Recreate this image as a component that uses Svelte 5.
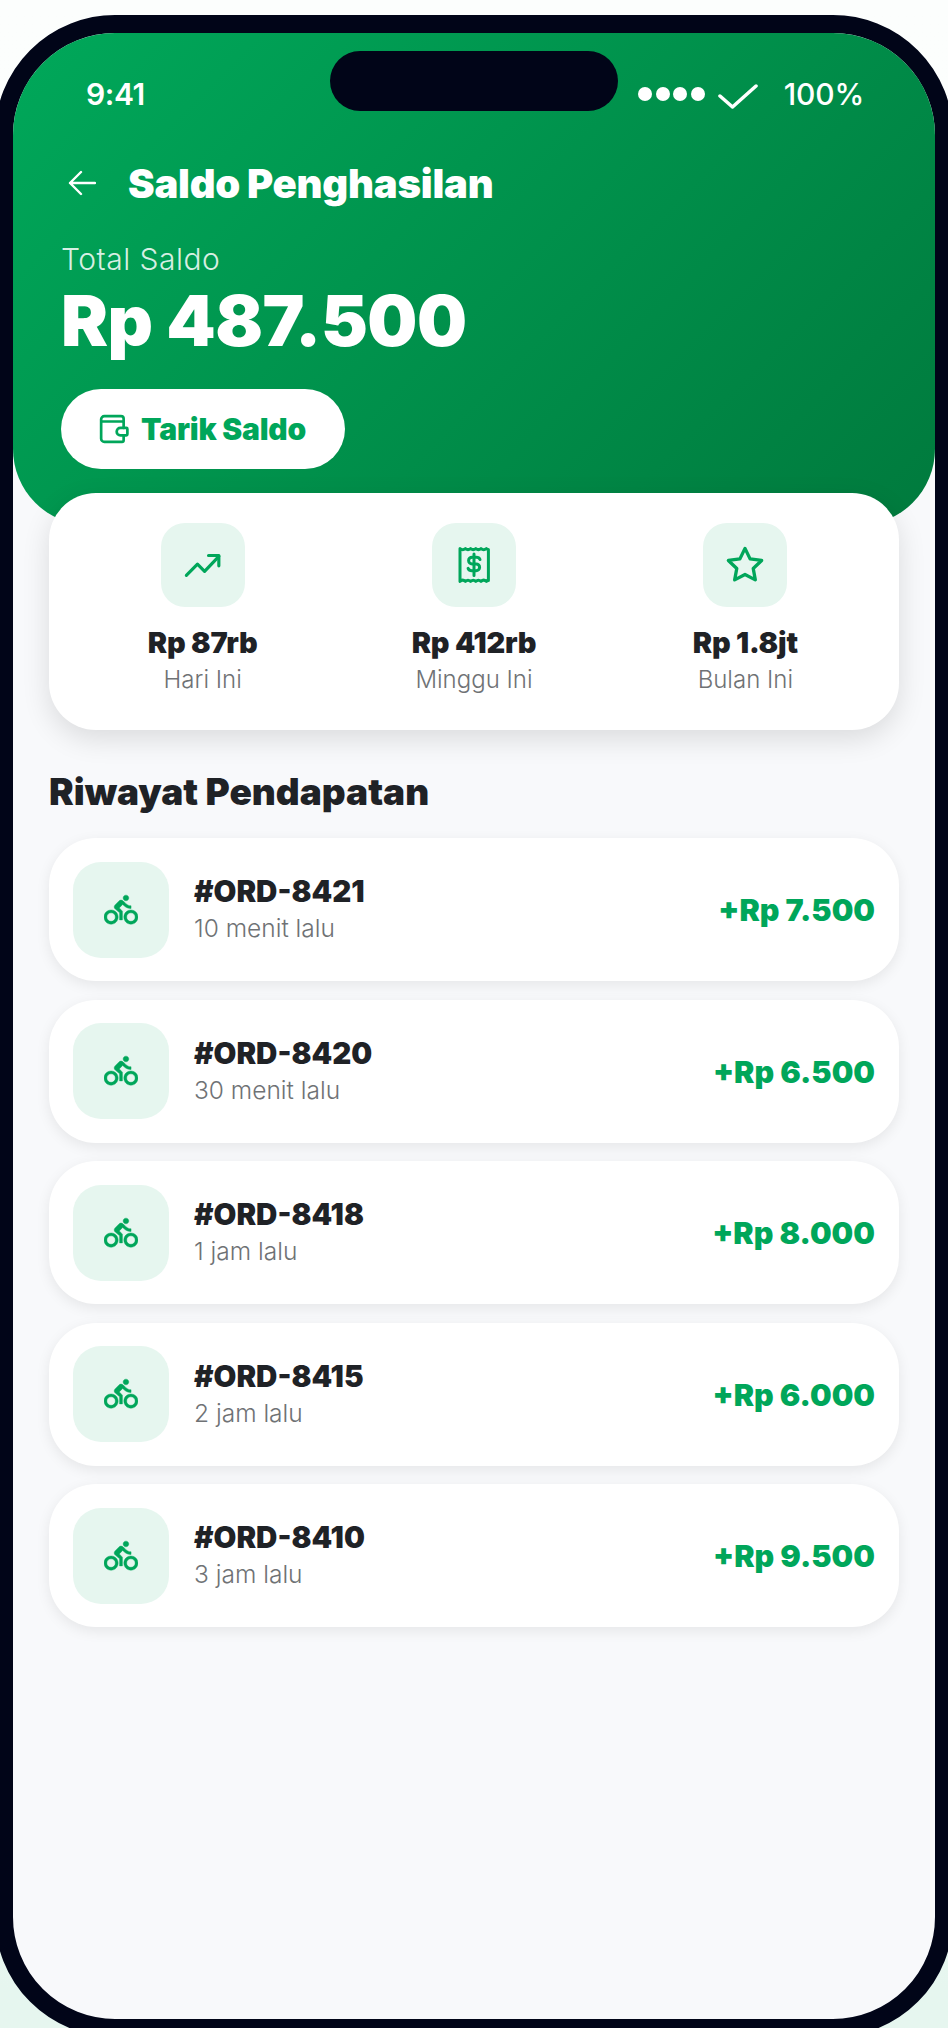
<script>
  const stats = [
    { icon: 'trend', value: 'Rp 87rb', label: 'Hari Ini' },
    { icon: 'receipt', value: 'Rp 412rb', label: 'Minggu Ini' },
    { icon: 'star', value: 'Rp 1.8jt', label: 'Bulan Ini' }
  ];

  const orders = [
    { id: '#ORD-8421', time: '10 menit lalu', amount: '+Rp 7.500' },
    { id: '#ORD-8420', time: '30 menit lalu', amount: '+Rp 6.500' },
    { id: '#ORD-8418', time: '1 jam lalu', amount: '+Rp 8.000' },
    { id: '#ORD-8415', time: '2 jam lalu', amount: '+Rp 6.000' },
    { id: '#ORD-8410', time: '3 jam lalu', amount: '+Rp 9.500' }
  ];
</script>

<div class="page">
  <div class="phone">
    <div class="screen">
      <div class="notch"></div>

      <header class="hero">
        <div class="status">
          <span class="time">9:41</span>
          <span class="status-right">
            <span class="dots"><i></i><i></i><i></i><i></i></span>
            <svg class="check" viewBox="0 0 40 25" fill="none" stroke="#fff" stroke-width="3.500" stroke-linecap="round" stroke-linejoin="round">
              <path d="M2 12 L14.500 23 L38 2" />
            </svg>
            <span class="battery">100%</span>
          </span>
        </div>

        <div class="title-row">
          <svg class="back" viewBox="0 0 28 26" fill="none" stroke="#fff" stroke-width="2.400" stroke-linecap="round" stroke-linejoin="round">
            <path d="M27 13H2M13 2 2 13l11 11" />
          </svg>
          <h1>Saldo Penghasilan</h1>
        </div>

        <div class="total-label">Total Saldo</div>
        <div class="total">Rp 487.500</div>

        <button class="withdraw">
          <svg viewBox="0 0 28 28" fill="none" stroke="#00a65a" stroke-width="2.500" stroke-linecap="round" stroke-linejoin="round">
            <path d="M23 7V4.500A2.500 2.500 0 0 0 20.500 2H5a3 3 0 0 0-3 3v18a3 3 0 0 0 3 3h16.500a1.500 1.500 0 0 0 1.500-1.500V20" />
            <path d="M2.500 7H23v6" />
            <path d="M20 13h5.500a1 1 0 0 1 1 1v5a1 1 0 0 1-1 1H20a3.500 3.500 0 0 1 0-7z" />
          </svg>
          Tarik Saldo
        </button>
      </header>

      <section class="summary">
        {#each stats as stat}
          <div class="stat">
            <div class="stat-icon">
              {#if stat.icon === 'trend'}
                <svg width="38" height="38" viewBox="0 0 24 24" fill="none" stroke="#00a65a" stroke-width="2" stroke-linecap="round" stroke-linejoin="round">
                  <path d="M1.500 18.500 8.500 11.500l4.500 4.500L22 6.500" />
                  <path d="M15.500 6H22v6.500" />
                </svg>
              {:else if stat.icon === 'receipt'}
                <svg width="32" height="38" viewBox="0 0 32 38" fill="none" stroke="#00a65a" stroke-width="3" stroke-linecap="round" stroke-linejoin="round">
                  <path d="M2 2.500c2 1.800 3.400 1.800 5.400 0 2 1.800 3.200 1.800 5.200 0 2 1.800 3.200 1.800 5.200 0 2 1.800 3.200 1.800 5.200 0 2 1.800 3.400 1.800 5.400 0 1 .9 1 .9 2 .9V34.500c-1 0-1 0-2 .9-2-1.800-3.400-1.800-5.400 0-2-1.800-3.200-1.800-5.200 0-2-1.800-3.200-1.800-5.200 0-2-1.800-3.200-1.800-5.200 0-2-1.800-3.400-1.800-5.400 0z" />
                  <path d="M22 13.500c-.6-1.500-1.900-2.300-3.700-2.300h-4.200c-2 0-3.500 1.400-3.500 3.300s1.500 3.400 3.500 3.400h4c2 0 3.500 1.500 3.500 3.400s-1.500 3.400-3.500 3.400h-4.300c-1.800 0-3.100-.8-3.700-2.300M16 8v21.500" />
                </svg>
              {:else}
                <svg width="42" height="42" viewBox="0 0 24 24" fill="none" stroke="#00a65a" stroke-width="1.900" stroke-linecap="round" stroke-linejoin="round">
                  <path d="M12 2.500l2.900 6 6.600.9-4.800 4.600 1.200 6.500L12 17.400l-5.900 3.100 1.200-6.500-4.800-4.600 6.600-.9z" />
                </svg>
              {/if}
            </div>
            <div class="stat-value">{stat.value}</div>
            <div class="stat-label">{stat.label}</div>
          </div>
        {/each}
      </section>

      <h2>Riwayat Pendapatan</h2>

      <div class="list">
        {#each orders as order}
          <div class="row">
            <div class="row-icon">
              <svg width="34" height="34" viewBox="0 0 24 24" fill="#00a65a" stroke="#00a65a" stroke-width="0.300">
                <path d="M15.500 5.500c1.100 0 2-.9 2-2s-.9-2-2-2-2 .9-2 2 .9 2 2 2zM5 12c-2.800 0-5 2.200-5 5s2.200 5 5 5 5-2.200 5-5-2.200-5-5-5zm0 8c-1.700 0-3-1.300-3-3s1.300-3 3-3 3 1.300 3 3-1.300 3-3 3zm5.800-9.500 2.400-2.400.8.800c1.300 1.300 3 2.100 5.100 2.100V9c-1.500 0-2.700-.6-3.600-1.500l-1.900-1.900c-.5-.4-1-.6-1.600-.6s-1.100.2-1.400.6L7.800 8.400c-.4.400-.6.900-.6 1.400 0 .6.200 1.100.6 1.400L11 14v5h2v-6.200l-2.200-2.300zM19 12c-2.800 0-5 2.200-5 5s2.200 5 5 5 5-2.200 5-5-2.200-5-5-5zm0 8c-1.700 0-3-1.300-3-3s1.300-3 3-3 3 1.300 3 3-1.300 3-3 3z" />
              </svg>
            </div>
            <div class="row-text">
              <div class="order-id">{order.id}</div>
              <div class="order-time">{order.time}</div>
            </div>
            <div class="amount">{order.amount}</div>
          </div>
        {/each}
      </div>
    </div>
  </div>
</div>

<style>
  :global(body) {
    margin: 0;
    overflow: hidden;
  }

  .page {
    width: 948px;
    height: 2028px;
    overflow: hidden;
    background: linear-gradient(180deg, #fcfefd 0%, #fafdfc 70%, #e6f6ef 98%);
    font-family: "Inter", "Open Sans", sans-serif;
  }

  .phone {
    box-sizing: border-box;
    width: 958px;
    height: 2022px;
    margin: 15px 0 0 -5px;
    border: 18px solid #010518;
    border-radius: 120px;
    overflow: hidden;
    background: #f8f9fb;
  }

  .screen {
    position: relative;
    height: 100%;
  }

  .notch {
    position: absolute;
    top: 18px;
    left: 317px;
    width: 288px;
    height: 60px;
    border-radius: 30px;
    background: #010518;
  }

  .hero {
    box-sizing: border-box;
    height: 492px;
    padding: 0 48px;
    border-radius: 0 0 76px 76px;
    background: linear-gradient(135deg, #00a85a 0%, #007a3d 100%);
    color: #fff;
  }

  .status {
    display: flex;
    justify-content: space-between;
    align-items: center;
    height: 121px;
    padding-left: 25px;
    margin-right: 23px;
  }

  .time {
    font-size: 30px;
    font-weight: 600;
    letter-spacing: -0.4px;
  }

  .status-right {
    display: flex;
    align-items: center;
  }

  .dots {
    display: flex;
    gap: 3.500px;
  }

  .dots i {
    width: 14px;
    height: 14px;
    border-radius: 50%;
    background: #fff;
  }

  .check {
    width: 40px;
    height: 25px;
    margin: 6px 26px 0 13px;
  }

  .battery {
    font-size: 30px;
    font-weight: 500;
    letter-spacing: -0.2px;
  }

  .title-row {
    display: flex;
    align-items: center;
    gap: 32px;
    height: 50px;
    margin: 4px 0 0 7px;
  }

  .back {
    width: 28px;
    height: 26px;
  }

  h1 {
    margin: 0;
    font-size: 40px;
    font-weight: 900;
    letter-spacing: -0.2px;
    word-spacing: -1px;
  }

  .total-label {
    margin-top: 33px;
    font-size: 30px;
    font-weight: 300;
    line-height: 36px;
    letter-spacing: 0.5px;
    color: rgba(255, 255, 255, 0.85);
  }

  .total {
    margin-top: 1px;
    font-size: 70.500px;
    font-weight: 900;
    line-height: 86px;
    letter-spacing: -0.5px;
  }

  .withdraw {
    display: flex;
    align-items: center;
    gap: 12px;
    width: 284px;
    height: 80px;
    margin-top: 25px;
    padding: 0 0 0 38px;
    border: none;
    border-radius: 40px;
    background: #fff;
    color: #00a65a;
    font: 900 30px "Inter", sans-serif;
    letter-spacing: -0.2px;
  }

  .withdraw svg {
    width: 30px;
    height: 30px;
    flex: none;
  }

  .summary {
    position: relative;
    display: grid;
    grid-template-columns: repeat(3, 1fr);
    height: 237px;
    box-sizing: border-box;
    margin: -32px 36px 0;
    padding: 30px 18px 0;
    border-radius: 47px;
    background: #fff;
    box-shadow: 0 9px 28px rgba(0, 0, 0, 0.12);
  }

  .stat {
    display: flex;
    flex-direction: column;
    align-items: center;
  }

  .stat-icon {
    display: flex;
    align-items: center;
    justify-content: center;
    width: 84px;
    height: 84px;
    border-radius: 24px;
    background: #e6f6ef;
  }

  .stat-value {
    margin-top: 17px;
    font-size: 29px;
    font-weight: 900;
    line-height: 38px;
    letter-spacing: -0.2px;
    color: #1f2226;
  }

  .stat-label {
    font-size: 24px;
    font-weight: 300;
    line-height: 36px;
    color: #6f7275;
  }

  h2 {
    margin: 40px 36px 24px;
    font-size: 37px;
    font-weight: 900;
    line-height: 44px;
    letter-spacing: 0;
    color: #1f2226;
  }

  .list {
    display: flex;
    flex-direction: column;
    gap: 18.500px;
    margin: 0 36px;
  }

  .row {
    display: flex;
    align-items: center;
    height: 143px;
    box-sizing: border-box;
    padding: 0 24px;
    border-radius: 47px;
    background: #fff;
    box-shadow: 0 4px 14px rgba(0, 0, 0, 0.08);
  }

  .row-icon {
    display: flex;
    align-items: center;
    justify-content: center;
    width: 96px;
    height: 96px;
    flex: none;
    border-radius: 28px;
    background: #e6f6ef;
  }

  .row-text {
    flex: 1;
    margin-left: 25px;
  }

  .order-id {
    font-size: 29.500px;
    font-weight: 900;
    line-height: 38px;
    color: #1f2226;
  }

  .order-time {
    font-size: 24.500px;
    font-weight: 300;
    line-height: 37px;
    color: #6f7275;
  }

  .amount {
    font-size: 30.500px;
    font-weight: 900;
    color: #00a65a;
  }
</style>
